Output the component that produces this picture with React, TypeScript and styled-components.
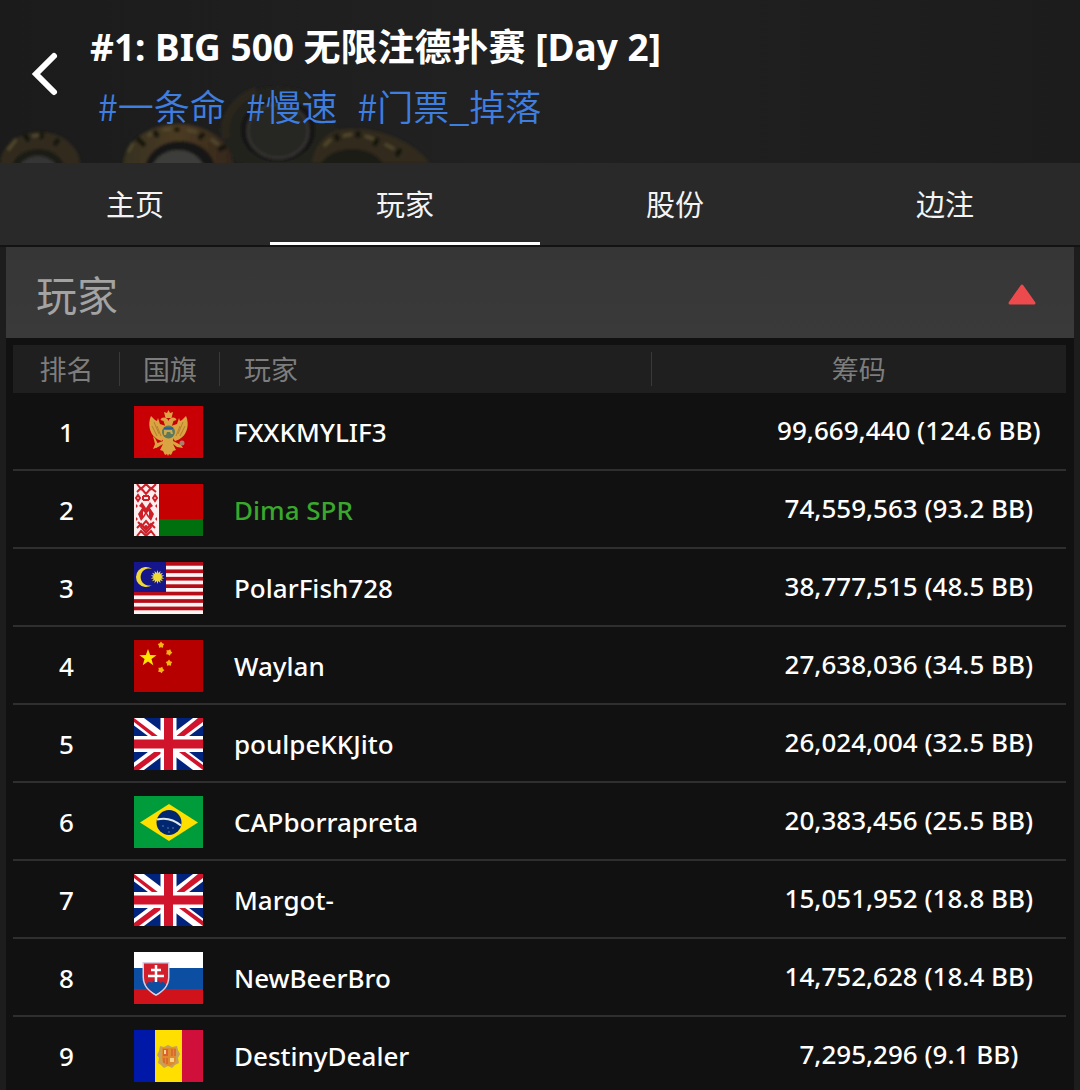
import React from "react";
import styled, { createGlobalStyle } from "styled-components";

const latin = `"Noto Sans", "Open Sans"`;
const cjk = `"Noto Sans CJK SC"`;

const GlobalStyle = createGlobalStyle`
  html {
    scrollbar-width: none;
  }
  body {
    margin: 0;
    background: #1d1d1d;
    color: #fff;
    font-family: ${latin}, ${cjk}, sans-serif;
  }
  * {
    box-sizing: border-box;
  }
`;

const Page = styled.div`
  display: flex;
  flex-direction: column;
  min-height: 100vh;
`;

const Header = styled.header`
  position: relative;
  display: flex;
  align-items: center;
  gap: 24px;
  height: 163px;
  padding: 0 24px;
  background: linear-gradient(90deg, #1b1b1b, #212121 45%, #1c1c1c);
  overflow: hidden;
`;

const ChipArt = styled.svg`
  position: absolute;
  left: 0;
  bottom: 0;
  width: 440px;
  height: 83px;
`;

const BackButton = styled.button`
  position: relative;
  display: flex;
  flex: none;
  justify-content: center;
  width: 42px;
  padding: 0;
  margin-top: -16px;
  border: 0;
  background: none;
  color: #fff;
  cursor: pointer;
`;

const HeaderText = styled.div`
  position: relative;
  display: flex;
  flex-direction: column;
  padding-bottom: 14px;
`;

const Title = styled.h1`
  margin: 0;
  font-size: 37px;
  line-height: 60px;
  font-weight: 700;
  white-space: nowrap;
`;

const Tags = styled.div`
  display: flex;
  gap: 20px;
  padding-left: 8px;
`;

const Tag = styled.a`
  color: #3e7ee0;
  font-family: ${cjk}, sans-serif;
  font-size: 36px;
  line-height: 56px;
  font-weight: 350;
  text-decoration: none;
  white-space: nowrap;
`;

const Tabs = styled.nav`
  display: grid;
  grid-template-columns: repeat(4, 1fr);
  background: #292929;
  border-bottom: 2px solid #131313;
`;

const Tab = styled.button<{ $active?: boolean }>`
  height: 82px;
  padding: 0;
  border: 0;
  border-bottom: 3px solid ${(p) => (p.$active ? "#fff" : "transparent")};
  background: none;
  color: #f4f4f4;
  font-family: ${cjk}, sans-serif;
  font-size: 29px;
  line-height: 40px;
  cursor: pointer;
`;

const Panel = styled.section`
  flex: 1;
  margin: 0 6px;
  background: #111;
`;

const PanelHeading = styled.div`
  display: flex;
  align-items: center;
  justify-content: space-between;
  height: 91px;
  padding: 0 37px 0 30px;
  background: linear-gradient(#363636, #3a3a3a);
`;

const PanelTitle = styled.h2`
  margin: 0;
  color: #a3a3a3;
  font-family: ${cjk}, sans-serif;
  font-size: 41px;
  line-height: 60px;
  font-weight: 400;
`;

const Toggle = styled.button`
  display: flex;
  padding: 4px 0 0;
  border: 0;
  background: none;
  cursor: pointer;
`;

const TableWrap = styled.div`
  padding: 7px 8px 0 7px;
`;

const Table = styled.table`
  width: 100%;
  table-layout: fixed;
  border-collapse: separate;
  border-spacing: 0;
`;

const Col = styled.col<{ $width?: string }>`
  width: ${(p) => p.$width ?? "auto"};
`;

const HeadCell = styled.th<{ $left?: boolean; $last?: boolean }>`
  height: 48px;
  padding: 0 0 0 ${(p) => (p.$left ? "24px" : "0")};
  background:
    ${(p) => (p.$last ? "" : "linear-gradient(#393939, #393939) right center / 1px 34px no-repeat,")}
    #1f1f1f;
  color: #7d7d7d;
  font-family: ${cjk}, sans-serif;
  font-size: 27px;
  line-height: 40px;
  font-weight: 400;
  text-align: ${(p) => (p.$left ? "left" : "center")};
`;

const Cell = styled.td`
  height: 78px;
  padding: 2px 0 0;
  border-bottom: 2px solid #2f2f2f;
  font-size: 26px;
  line-height: 36px;
  font-weight: 500;
  text-align: center;
  white-space: nowrap;
`;

const FlagCell = styled(Cell)`
  padding-right: 4px;
`;

const NameCell = styled(Cell)<{ $self: boolean }>`
  padding-left: 14px;
  color: ${(p) => (p.$self ? "#39a82c" : "#fff")};
  text-align: left;
`;

const ChipsCell = styled(Cell)`
  padding: 0 0 2px 100px;
`;

const FlagSvg = styled.svg`
  display: block;
  width: 69px;
  height: 52px;
  margin: 0 auto;
`;

function star(cx: number, cy: number, outer: number, inner: number, points = 5, turn = 0) {
  const out: string[] = [];
  for (let i = 0; i < points * 2; i++) {
    const r = i % 2 ? inner : outer;
    const a = (Math.PI * i) / points - Math.PI / 2 + turn;
    out.push(`${(cx + r * Math.cos(a)).toFixed(2)},${(cy + r * Math.sin(a)).toFixed(2)}`);
  }
  return out.join(" ");
}

const Montenegro = () => (
  <>
    <rect width="69" height="52" fill="#c80006" />
    <g fill="#d9a441">
      <path d="M30 6l3 1 1.500-3 1.500 3 3-1-1.500 6h-6z" />
      <path d="M34.500 15c-1-4-7-5-8-1l3 1 2 6h6l2-6 3-1c-1-4-7-3-8 1z" />
      <path d="M17 10c-4 9-1 22 11 25l4-6v-9l-6-2-2-6-1 3-2-1z" />
      <path d="M52 10c4 9 1 22-11 25l-4-6v-9l6-2 2-6 1 3 2-1z" />
      <path d="M29 28h11l-1 7 8 4 2 3-6-1-4-3 3 6-3 1-2 4-2-1-1 2-1-2-2 1-2-4-3-1 3-6-5 3-5 2 2-5 8-3z" />
      <path d="M19 30l2 2 4 8-3 2z" />
    </g>
    <g stroke="#a8742a" strokeWidth="0.800" fill="none">
      <path d="M20 16l5 12M23 20l4 10M49 16l-5 12M46 20l-4 10M18 20l5 10M51 20l-5 10" />
    </g>
    <circle cx="34.500" cy="26" r="6.500" fill="#5b7a5c" />
    <path d="M30 24h8l1 4h-2l-1-2h-3l-1 3h-2z" fill="#c9a94f" />
    <path d="M30 23h9v-1.500h-9z" fill="#2c5c97" />
    <circle cx="48" cy="37" r="2.500" fill="#a8806c" />
  </>
);

const Belarus = () => (
  <>
    <rect width="69" height="35" fill="#c40000" />
    <rect y="35" width="69" height="17" fill="#00700f" />
    <rect width="25" height="52" fill="#fbeeee" />
    <g fill="none" stroke="#cc1f28" strokeWidth="2">
      <path d="M3 0l4 5 5-5 5 5 5-5M3 8l4-4 5 6 5-6 5 4" />
      <path d="M4 11l2 3-2 3-2-3zM21 11l2 3-2 3-2-3z" />
      <path d="M9 12h6M9 16h6M9 12v4M15 12v4" />
      <path d="M3 44l4-4 5 6 5-6 4 4M3 52l4-5 5 5 5-5 4 5" />
      <path d="M12 37l5 6-5 6-5-6zM4 38l4 4M20 38l-4 4" />
    </g>
    <g fill="#cc1f28">
      <path d="M12 24l-4-6-3 4 3 2-4 6 3 7 4-5 1-2 1 2 4 5 3-7-4-6 3-2-3-4z" />
      <circle cx="12" cy="43" r="2" />
      <path d="M2 20l2 2-2 2zM23 20l-2 2 2 2zM2 33l2 2-2 2zM23 33l-2 2 2 2z" />
    </g>
    <path d="M9 27l2 2-2 3zM15 27l-2 2 2 3z" fill="#fbeeee" />
  </>
);

const Malaysia = () => (
  <>
    <rect width="69" height="52" fill="#fff4f4" />
    {[0, 1, 2, 3, 4, 5, 6].map((i) => (
      <rect key={i} y={(i * 104) / 14} width="69" height={52 / 14} fill="#b40d18" />
    ))}
    <rect width="32" height="30" fill="#15158c" />
    <path d="M18 7A10 10 0 1 0 18 23A8.500 8.500 0 1 1 18 7z" fill="#f0da35" />
    <polygon points={star(23.5, 15, 7, 4, 14)} fill="#f0da35" />
  </>
);

const China = () => (
  <>
    <rect width="69" height="52" fill="#b60000" />
    <polygon points={star(14, 18, 9, 3.6)} fill="#ffe600" />
    <g fill="#f4b414">
      <polygon points={star(27, 5, 3.4, 2.2)} />
      <polygon points={star(35, 12.5, 3.4, 2.2, 5, 0.4)} />
      <polygon points={star(35, 23, 3.4, 2.2)} />
      <polygon points={star(27, 30, 3.4, 2.2, 5, 0.4)} />
    </g>
  </>
);

const Britain = () => (
  <>
    <rect width="69" height="52" fill="#00247d" />
    <path d="M0 0L69 52M69 0L0 52" stroke="#fff" strokeWidth="12" />
    <path
      d="M0 0l29 22h-6L0 4zM69 0h-5L40 20v2h5L69 4zM0 52h5l24-18v-3h-5L0 49zM69 52v-5L47 31h-6z"
      fill="#cf142b"
    />
    <path d="M34.500 0v52M0 26h69" stroke="#fff" strokeWidth="16" />
    <path d="M34.500 0v52M0 26h69" stroke="#cf142b" strokeWidth="9" />
  </>
);

const Brazil = () => (
  <>
    <rect width="69" height="52" fill="#009b3a" />
    <path d="M6 26.500L35 8l29 18.500L35 45z" fill="#fedf00" />
    <circle cx="35" cy="26.500" r="12.500" fill="#00276f" />
    <path d="M23 23.500c8-2 17 0 24 6" stroke="#dfe9e8" strokeWidth="2" fill="none" />
    <g fill="#7f9bb8">
      <circle cx="29" cy="30" r="0.700" />
      <circle cx="34" cy="32" r="0.700" />
      <circle cx="39" cy="32" r="0.700" />
      <circle cx="35" cy="36" r="0.700" />
    </g>
  </>
);

const Slovakia = () => (
  <>
    <rect width="69" height="52" fill="#fff" />
    <rect y="16" width="69" height="21" fill="#0b4ea2" />
    <rect y="37" width="69" height="15" fill="#d0121b" />
    <path d="M8.500 10h27v15c0 9-6 15-13.500 19C14.500 40 8.500 34 8.500 25z" fill="#d9cfe0" />
    <path d="M10 11.500h24V25c0 8-5 13-12 17-7-4-12-9-12-17z" fill="#d21f2b" />
    <path d="M12 33c1-3 4-4 6-2 1-4 7-4 8 0 2-2 5-1 6 2-2 4-6 7-10 9-4-2-8-5-10-9z" fill="#0b4ea2" />
    <path d="M22 13v17M17 18h10M14 24h16" stroke="#fff" strokeWidth="2.500" />
  </>
);

const Andorra = () => (
  <>
    <rect width="22" height="52" fill="#0018a8" />
    <rect x="21" width="28" height="52" fill="#fedf00" />
    <rect x="48" width="21" height="52" fill="#d0103a" />
    <path
      d="M26 16l4 1 4-2 4 2 5-1 1 4 2 4-2 4 1 5-4 2-3 3-4-2-4 2-3-3-3-2 1-5-2-3 2-4z"
      fill="#c7a05a"
    />
    <path d="M28 18h14v11c0 4-4 6-7 7-3-1-7-3-7-7z" fill="#e08a2c" />
    <path d="M29 19h5v7h-5z" fill="#d9603a" />
    <path d="M38 19v7M41 19v7M30 28v5M33 28v6" stroke="#d0502e" strokeWidth="1" />
    <path d="M30 20h2v4h-2zM36 28h4v4h-4z" fill="#f2d58a" />
  </>
);

const flags = {
  ME: { label: "Montenegro", Art: Montenegro },
  BY: { label: "Belarus", Art: Belarus },
  MY: { label: "Malaysia", Art: Malaysia },
  CN: { label: "China", Art: China },
  GB: { label: "United Kingdom", Art: Britain },
  BR: { label: "Brazil", Art: Brazil },
  SK: { label: "Slovakia", Art: Slovakia },
  AD: { label: "Andorra", Art: Andorra },
};

type Player = {
  flag: keyof typeof flags;
  name: string;
  chips: string;
  self?: boolean;
};

const players: Player[] = [
  { flag: "ME", name: "FXXKMYLIF3", chips: "99,669,440 (124.6 BB)" },
  { flag: "BY", name: "Dima SPR", chips: "74,559,563 (93.2 BB)", self: true },
  { flag: "MY", name: "PolarFish728", chips: "38,777,515 (48.5 BB)" },
  { flag: "CN", name: "Waylan", chips: "27,638,036 (34.5 BB)" },
  { flag: "GB", name: "poulpeKKJito", chips: "26,024,004 (32.5 BB)" },
  { flag: "BR", name: "CAPborrapreta", chips: "20,383,456 (25.5 BB)" },
  { flag: "GB", name: "Margot-", chips: "15,051,952 (18.8 BB)" },
  { flag: "SK", name: "NewBeerBro", chips: "14,752,628 (18.4 BB)" },
  { flag: "AD", name: "DestinyDealer", chips: "7,295,296 (9.1 BB)" },
];

const Flag = ({ code }: { code: keyof typeof flags }) => {
  const { label, Art } = flags[code];
  return (
    <FlagSvg viewBox="0 0 69 52" role="img" aria-label={label}>
      <Art />
    </FlagSvg>
  );
};

const PokerChips = () => (
  <ChipArt viewBox="0 80 440 83" aria-hidden="true">
    <defs>
      <linearGradient id="gold" x1="0" x2="1">
        <stop offset="0" stopColor="#35301f" />
        <stop offset="0.5" stopColor="#4b3b22" />
        <stop offset="1" stopColor="#33261a" />
      </linearGradient>
      <filter id="soft">
        <feGaussianBlur stdDeviation="1.6" />
      </filter>
    </defs>
    <g filter="url(#soft)">
      <ellipse cx="278" cy="130" rx="58" ry="43" fill="#23211d" />
      <path d="M226 138a54 44 0 0 1 30-47" fill="none" stroke="#2a261c" strokeWidth="8" />
      <ellipse cx="278" cy="130" rx="38" ry="32" fill="#191919" />
      <ellipse cx="278" cy="131" rx="30" ry="27" fill="#262523" stroke="#343330" strokeWidth="3" />
      <ellipse cx="40" cy="165" rx="40" ry="33" fill="#302c1e" />
      <ellipse cx="38" cy="170" rx="27" ry="21" fill="#1a1a19" />
      <ellipse cx="38" cy="172" rx="20" ry="16" fill="#363634" />
      <ellipse cx="178" cy="166" rx="55" ry="42" fill="url(#gold)" />
      <ellipse cx="180" cy="170" rx="35" ry="29" fill="#171716" />
      <ellipse cx="178" cy="173" rx="27" ry="23" fill="#3d3d3b" />
      <path
        d="M312 163c3-20 16-33 34-34 30-2 64 10 84 34z"
        fill="#312b1b"
      />
      <ellipse cx="352" cy="176" rx="36" ry="27" fill="#1b1a17" />
      <g stroke="#171510" strokeWidth="5">
        <path d="M24 134l5 7M42 132l-1 7M59 139l-5 6M137 138l8 8M154 131l4 6M177 127v5M204 133l-5 6M226 146l-8 4" />
        <path d="M336 134l2 7M358 131v7M378 138l-4 8M401 149l-5 7" />
      </g>
      <path
        d="M8 150l8-11M32 136l7-1M128 152l5-9M148 136l4-3M163 130l8-1M187 130l10 2M211 139l8 6M324 146l7-7M343 136l9-2M365 136l9 3M385 144l9 5"
        stroke="#544a2e"
        strokeWidth="3"
      />
    </g>
  </ChipArt>
);

export default function App() {
  return (
    <Page>
      <GlobalStyle />
      <Header>
        <PokerChips />
        <BackButton aria-label="返回">
          <svg width="32" height="48" viewBox="0 0 32 48">
            <path
              d="M25 6L7 24l18 18"
              fill="none"
              stroke="currentColor"
              strokeWidth="6"
              strokeLinecap="round"
            />
          </svg>
        </BackButton>
        <HeaderText>
          <Title>#1: BIG 500 无限注德扑赛 [Day 2]</Title>
          <Tags>
            <Tag href="#tag-one-life">#一条命</Tag>
            <Tag href="#tag-slow">#慢速</Tag>
            <Tag href="#tag-ticket">#门票_掉落</Tag>
          </Tags>
        </HeaderText>
      </Header>
      <Tabs>
        <Tab>主页</Tab>
        <Tab $active>玩家</Tab>
        <Tab>股份</Tab>
        <Tab>边注</Tab>
      </Tabs>
      <Panel>
        <PanelHeading>
          <PanelTitle>玩家</PanelTitle>
          <Toggle aria-label="收起">
            <svg width="30" height="24" viewBox="0 0 30 24">
              <path
                d="M15 3L27 20H3z"
                fill="#ec4a4d"
                stroke="#ec4a4d"
                strokeWidth="3"
                strokeLinejoin="round"
              />
            </svg>
          </Toggle>
        </PanelHeading>
        <TableWrap>
          <Table>
            <colgroup>
              <Col $width="107px" />
              <Col $width="100px" />
              <Col $width="41%" />
              <Col />
            </colgroup>
            <thead>
              <tr>
                <HeadCell scope="col">排名</HeadCell>
                <HeadCell scope="col">国旗</HeadCell>
                <HeadCell scope="col" $left>
                  玩家
                </HeadCell>
                <HeadCell scope="col" $last>
                  筹码
                </HeadCell>
              </tr>
            </thead>
            <tbody>
              {players.map((player, i) => (
                <tr key={player.name}>
                  <Cell>{i + 1}</Cell>
                  <FlagCell>
                    <Flag code={player.flag} />
                  </FlagCell>
                  <NameCell $self={!!player.self}>{player.name}</NameCell>
                  <ChipsCell>{player.chips}</ChipsCell>
                </tr>
              ))}
            </tbody>
          </Table>
        </TableWrap>
      </Panel>
    </Page>
  );
}
